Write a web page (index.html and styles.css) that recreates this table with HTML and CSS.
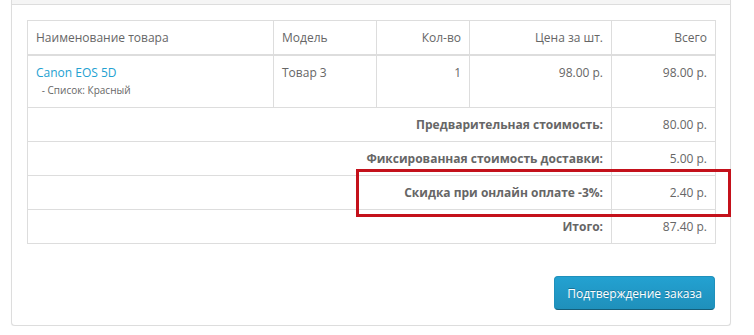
FILE: index.html
```html
<!DOCTYPE html>
<html lang="ru">
<head>
<meta charset="utf-8">
<link rel="stylesheet" href="styles.css">
</head>
<body>
<div class="page">
  <div class="panel">
    <div class="panel-heading"></div>
    <div class="panel-body">
      <div class="table-wrap">
        <table class="cart">
          <colgroup>
            <col class="c-name"><col class="c-model"><col class="c-qty"><col class="c-price"><col class="c-total">
          </colgroup>
          <thead>
            <tr>
              <th class="left">Наименование товара</th>
              <th class="left">Модель</th>
              <th class="right">Кол-во</th>
              <th class="right">Цена за шт.</th>
              <th class="right">Всего</th>
            </tr>
          </thead>
          <tbody>
            <tr class="item">
              <td class="left"><a href="#" class="prod">Canon EOS 5D</a><br>&nbsp;<small> - Список: Красный</small></td>
              <td class="left">Товар 3</td>
              <td class="right">1</td>
              <td class="right">98.00 р.</td>
              <td class="right">98.00 р.</td>
            </tr>
          </tbody>
          <tfoot>
            <tr>
              <td colspan="4" class="right label">Предварительная стоимость:</td>
              <td class="right">80.00 р.</td>
            </tr>
            <tr>
              <td colspan="4" class="right label">Фиксированная стоимость доставки:</td>
              <td class="right">5.00 р.</td>
            </tr>
            <tr>
              <td colspan="4" class="right label">Скидка при онлайн оплате -3%:</td>
              <td class="right">2.40 р.</td>
            </tr>
            <tr>
              <td colspan="4" class="right label">Итого:</td>
              <td class="right">87.40 р.</td>
            </tr>
          </tfoot>
        </table>
        <div class="highlight"></div>
      </div>
      <div class="buttons">
        <button type="button" class="btn-primary">Подтверждение заказа</button>
      </div>
    </div>
  </div>
</div>
</body>
</html>
```

FILE: styles.css
```css
* { box-sizing: border-box; }

html, body {
  margin: 0;
  padding: 0;
  background: #fff;
}

body {
  font-family: "Open Sans", "Liberation Sans", sans-serif;
  font-size: 12px;
  line-height: 17px;
  color: #666;
}

.page {
  padding-left: 11px;
}

.panel {
  width: 720px;
  border: 1px solid #ddd;
  border-top: none;
  border-radius: 0 0 4px 4px;
  box-shadow: 0 1px 1px rgba(0, 0, 0, 0.05);
  background: #fff;
}

.panel-heading {
  height: 5px;
  background: #f5f5f5;
  border-bottom: 1px solid #ddd;
}

.panel-body {
  padding: 15px;
}

.table-wrap {
  position: relative;
}

.cart {
  width: 688px;
  table-layout: fixed;
  border-collapse: collapse;
  border: 1px solid #ddd;
}

.c-name { width: 246px; }
.c-model { width: 103px; }
.c-qty { width: 93px; }
.c-price { width: 142px; }
.c-total { width: 104px; }

.cart th,
.cart td {
  padding: 8px;
  border: 1px solid #ddd;
  vertical-align: top;
  font-weight: normal;
  line-height: 17px;
}

.cart thead th {
  border-bottom: 2px solid #ddd;
}

.left { text-align: left; }
.right { text-align: right; }

.cart td.label {
  font-weight: bold;
}

.prod {
  color: #23a1d1;
  text-decoration: none;
}

small {
  font-size: 10px;
}

.highlight {
  position: absolute;
  left: 329px;
  top: 149px;
  width: 375px;
  height: 48px;
  border: 3px solid #c4111b;
}

.buttons {
  display: flex;
  justify-content: flex-end;
  margin-top: 32px;
}

.btn-primary {
  font-family: "Open Sans", "Liberation Sans", sans-serif;
  font-size: 12px;
  line-height: 17px;
  height: 34px;
  padding: 7.5px 12px;
  color: #fff;
  border: 1px solid #1f90bb;
  border-bottom-color: #145e7a;
  border-radius: 4px;
  background-color: #229ac8;
  background-image: linear-gradient(to bottom, #23a1d1, #1f90bb);
  text-shadow: 0 -1px 0 rgba(0, 0, 0, 0.25);
  cursor: pointer;
}
```
